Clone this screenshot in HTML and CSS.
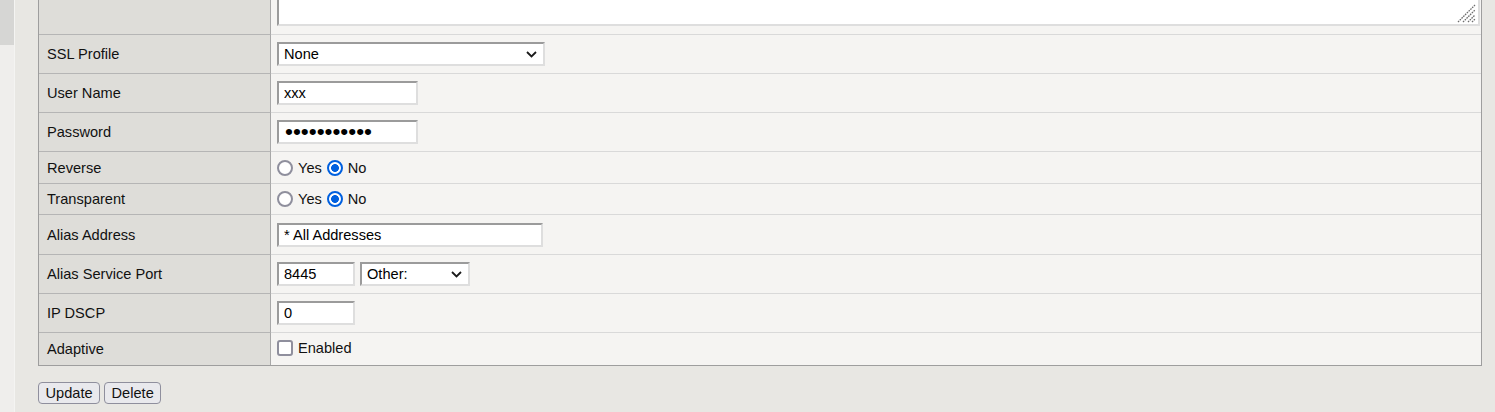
FILE: index.html
```html
<!DOCTYPE html>
<html lang="en">
  <head>
    <meta charset="UTF-8" />
    <meta name="viewport" content="width=device-width, initial-scale=1.0" />
    <title>Virtual Service</title>
    <link rel="stylesheet" href="styles.css">
  </head>
  <body>
    <div class="page">
      <div class="sidebar"><div class="sidebar-thumb"></div></div>
      <div class="main">
        <table class="form-table">
          <tr class="row-notes">
            <td class="label"></td>
            <td class="value">
              <div class="notes-wrap">
                <textarea class="notes"></textarea>
                <svg class="grip" width="19" height="19" viewBox="0 0 19 19">
                  <g stroke="#6e6e6e" stroke-width="1.3" stroke-dasharray="1.6 0.9">
                    <line x1="1" y1="18" x2="18" y2="1"/>
                    <line x1="6" y1="18" x2="18" y2="6"/>
                    <line x1="11" y1="18" x2="18" y2="11"/>
                    <line x1="15" y1="18" x2="18" y2="15"/>
                  </g>
                </svg>
              </div>
            </td>
          </tr>
          <tr class="row-field">
            <td class="label">SSL Profile</td>
            <td class="value">
              <span class="select-wrap">
                <select class="select select-wide">
                  <option>None</option>
                </select>
                <svg class="chevron" width="11" height="7" viewBox="0 0 11 7"><path d="M1 1 L5.5 5.5 L10 1" fill="none" stroke="#1a1a1a" stroke-width="1.8"/></svg>
              </span>
            </td>
          </tr>
          <tr class="row-field">
            <td class="label">User Name</td>
            <td class="value"><input class="text-input input-md" type="text" value="xxx"></td>
          </tr>
          <tr class="row-field">
            <td class="label">Password</td>
            <td class="value"><input class="text-input input-md input-password" type="password" value="xxxxxxxxxxx"></td>
          </tr>
          <tr class="row-choice">
            <td class="label">Reverse</td>
            <td class="value">
              <div class="choices">
                <label class="choice"><input type="radio" name="reverse">Yes</label>
                <label class="choice"><input type="radio" name="reverse" checked>No</label>
              </div>
            </td>
          </tr>
          <tr class="row-choice">
            <td class="label">Transparent</td>
            <td class="value">
              <div class="choices">
                <label class="choice"><input type="radio" name="transparent">Yes</label>
                <label class="choice"><input type="radio" name="transparent" checked>No</label>
              </div>
            </td>
          </tr>
          <tr class="row-field row-tall">
            <td class="label">Alias Address</td>
            <td class="value"><input class="text-input input-lg" type="text" value="* All Addresses"></td>
          </tr>
          <tr class="row-field">
            <td class="label">Alias Service Port</td>
            <td class="value">
              <div class="inline-fields">
                <input class="text-input input-sm" type="text" value="8445">
                <span class="select-wrap">
                  <select class="select select-port">
                    <option>Other:</option>
                  </select>
                  <svg class="chevron" width="11" height="7" viewBox="0 0 11 7"><path d="M1 1 L5.5 5.5 L10 1" fill="none" stroke="#1a1a1a" stroke-width="1.8"/></svg>
                </span>
              </div>
            </td>
          </tr>
          <tr class="row-field">
            <td class="label">IP DSCP</td>
            <td class="value"><input class="text-input input-sm" type="text" value="0"></td>
          </tr>
          <tr class="row-last">
            <td class="label">Adaptive</td>
            <td class="value">
              <label class="choice"><input type="checkbox">Enabled</label>
            </td>
          </tr>
        </table>
        <div class="actions">
          <button class="btn">Update</button>
          <button class="btn">Delete</button>
        </div>
      </div>
    </div>
  </body>
</html>
```

FILE: styles.css
```css
* {
  box-sizing: border-box;
}

body {
  margin: 0;
  background: #e8e7e3;
  font-family: "Liberation Sans", Arial, sans-serif;
  font-size: 14.6px;
  color: #111;
  overflow: hidden;
}

.page {
  display: flex;
  min-height: 100vh;
}

.sidebar {
  width: 15px;
  flex-shrink: 0;
  background: #efeeec;
  border-right: 1px solid #f4f4f2;
}

.sidebar-thumb {
  height: 45px;
  background: #d6d6d4;
}

.main {
  flex: 1;
  padding: 0 13px 0 23px;
}

.form-table {
  width: 100%;
  margin-top: -39px;
  table-layout: fixed;
  border-collapse: separate;
  border-spacing: 0;
  border: 1px solid #9e9e9e;
  border-top: none;
}

.form-table td {
  padding: 0 6px;
  vertical-align: middle;
}

.label {
  width: 232px;
  padding-left: 8px !important;
  background: #deddd9;
  border-right: 1px solid #a8a8a8;
  border-bottom: 1px solid #b5b5b5;
}

.value {
  background: #f5f4f2;
  border-bottom: 1px solid #d9d9d9;
}

.row-notes td {
  padding: 6px 1px 8px 6px;
}

.row-field td {
  height: 39px;
}

.row-tall td {
  height: 40px;
}

.row-choice td {
  height: 32px;
}

.row-choice + .row-choice td {
  height: 31px;
}

.row-last td {
  height: 32px;
  border-bottom: none;
}

.notes-wrap {
  position: relative;
}

.notes {
  display: block;
  width: 100%;
  height: 59px;
  border: 2px solid;
  border-color: #9b9b9b #dedede #dedede #9b9b9b;
  background: #fff;
  resize: none;
}

.grip {
  position: absolute;
  right: 4px;
  bottom: 3px;
  pointer-events: none;
}

.text-input,
.select {
  height: 24px;
  border: 2px solid;
  border-color: #9b9b9b #dedede #dedede #9b9b9b;
  background: #fff;
  font: 14.6px "Liberation Sans", Arial, sans-serif;
  color: #000;
  padding: 0 5px;
  vertical-align: middle;
}

.input-password {
  font-size: 22.6px;
  padding-left: 6px;
}

.input-sm {
  width: 78px;
}

.input-md {
  width: 141px;
}

.input-lg {
  width: 266px;
}

.select {
  appearance: none;
  -webkit-appearance: none;
  border-radius: 0;
  padding-right: 24px;
}

.select-wide {
  width: 268px;
}

.select-port {
  width: 110px;
}

.select-wrap {
  position: relative;
  display: inline-block;
}

.chevron {
  position: absolute;
  right: 8px;
  top: 9px;
  pointer-events: none;
}

.inline-fields {
  display: flex;
  align-items: center;
  gap: 5px;
}

.choices {
  display: flex;
  align-items: center;
  gap: 5px;
}

.choice {
  display: inline-flex;
  align-items: center;
}

.choice input {
  appearance: none;
  -webkit-appearance: none;
  width: 16px;
  height: 16px;
  margin: 0 5px 0 0;
  border: 2px solid #8f8f9d;
  background: #fff;
}

.choice input[type="radio"] {
  border-radius: 50%;
}

.choice input[type="radio"]:checked {
  border-color: #0060df;
  background: radial-gradient(circle, #0060df 0 3.6px, #fff 4.2px);
}

.choice input[type="checkbox"] {
  border-radius: 3px;
}

.actions {
  display: flex;
  gap: 4px;
  margin-top: 16px;
}

.btn {
  height: 22px;
  padding: 0 6.5px;
  border: 1px solid #8f8f9d;
  border-radius: 4px;
  background: #e9e9ed;
  font: 14.6px "Liberation Sans", Arial, sans-serif;
  color: #111;
}
```
